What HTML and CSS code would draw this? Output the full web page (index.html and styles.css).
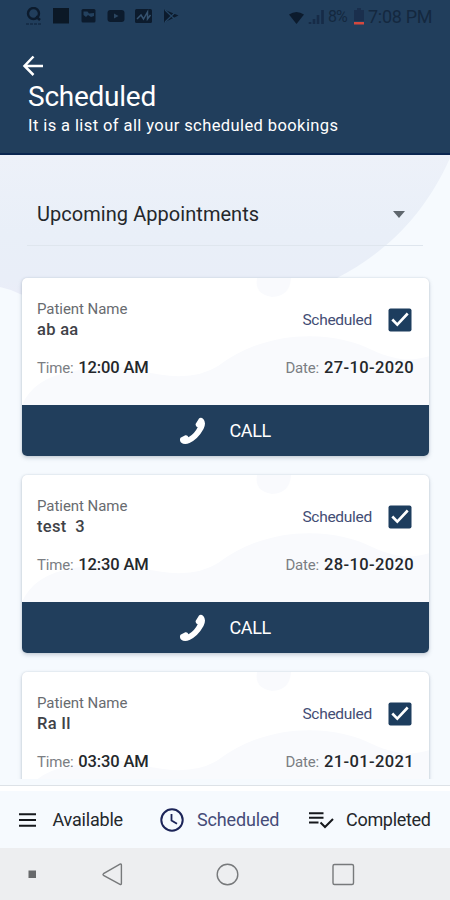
FILE: index.html
```html
<!DOCTYPE html>
<html lang="en">
<head>
<meta charset="utf-8">
<title>Scheduled</title>
<link rel="stylesheet" href="styles.css">
</head>
<body>
<svg class="defs" width="0" height="0" aria-hidden="true">
  <symbol id="waves" viewBox="0 0 408 127">
    <path d="M235 0H269Q268 18 250 19Q232 16 235 0Z"/>
    <path d="M0 127Q12 100 48 94Q86 84 116 92Q168 106 196 88C250 47 318 55 350 72C377 84 391 83 408 78V127Z"/>
  </symbol>
  <symbol id="check" viewBox="0 0 24 24">
    <rect x=".5" y=".5" width="23" height="23" rx="2" fill="#1d3d5e"/>
    <path d="M4.3 11.500l5 5.200L19.700 5.500" fill="none" stroke="#fff" stroke-width="2.6"/>
  </symbol>
  <symbol id="phone" viewBox="0 0 28 28">
    <path d="M20 1.500Q22-.2 24.500 2.200Q27.500 6 24.500 12Q19 22 10.500 26Q5.500 28.300 2 25.500Q.2 23 1.500 20.800L6.300 18.300Q8.500 17.800 9.500 20.200Q15.500 17 18.700 10.300Q16.300 9.500 16.600 7Z" fill="#fff"/>
  </symbol>
</svg>

<header class="header">
  <div class="status">
    <svg class="status-icons" width="160" height="20" viewBox="0 0 160 20">
      <g fill="none" stroke="#0c1b2d" stroke-width="2.400"><circle cx="7.500" cy="6.500" r="5.500"/><path d="M10 9.500l4 3.500"/></g>
      <path d="M0 17h15" stroke="#132a43" stroke-width="1.600" stroke-dasharray="3 1"/>
      <rect x="27" y="1" width="16" height="15.500" fill="#0b1826"/>
      <rect x="55.500" y="2" width="14" height="13.500" rx="1.500" fill="#0c1b2d"/>
      <path d="M57.500 8V4.500h4l1.500 2 5-.5v3l-3 1-3-2-2 2z" fill="#23415f"/>
      <rect x="81.500" y="3" width="17" height="12" rx="3" fill="#0c1b2d"/><path d="M88 6.500v5l4.500-2.500z" fill="#2b4661"/>
      <rect x="109" y="2" width="17" height="14" rx="1.500" fill="#0c1b2d"/>
      <path d="M111 12l4-4 2.500 4 4-7v7l3-4" fill="none" stroke="#365370" stroke-width="1.500"/>
      <path d="M138 2.500L152.500 8.500 138 15.500z" fill="#0c1b2d"/><path d="M139 3l9.500 9M139 15l9.500-9" stroke="#254564" stroke-width="1.200"/>
    </svg>
    <div class="status-right">
      <svg width="15" height="14" viewBox="0 0 15 14"><path d="M0 3.500Q7.500-1.500 15 3.500L7.500 13z" fill="#0c1b2d"/></svg>
      <svg class="signal" width="16" height="16" viewBox="0 0 16 16"><path d="M2 15v-2M6 15v-5M10 15V6M14.500 15V1" stroke="#162b47" stroke-width="2.600"/></svg>
      <span class="battery-text">8%</span>
      <svg class="battery" width="10" height="17" viewBox="0 0 10 17"><path d="M0 2h3V0h4v2h3v11H0z" fill="#1a2f4d"/><path d="M0 14h10v2.500H0z" fill="#d4483e"/></svg>
      <span class="clock">7:08 PM</span>
    </div>
  </div>
  <svg class="back" width="22" height="22" viewBox="0 0 22 22"><path d="M11.500 1.500L2.500 11l9 9M2.500 11H21" fill="none" stroke="#fff" stroke-width="2.500"/></svg>
  <h1>Scheduled</h1>
  <p class="subtitle">It is a list of all your scheduled bookings</p>
</header>

<main class="main">
  <svg class="backdrop" width="450" height="150" viewBox="0 0 450 150">
    <defs><linearGradient id="g" x1="0" y1="0" x2="0" y2="1"><stop offset="0" stop-color="#edf1f9"/><stop offset=".5" stop-color="#e9eff8"/><stop offset=".8" stop-color="#e9eef8"/><stop offset="1" stop-color="#ececf8"/></linearGradient></defs>
    <path d="M0 0H450V3C426 57 389 96 337 123C230 172 88 158 20 139Q10 134 0 132Z" fill="url(#g)"/>
  </svg>
  <div class="select"><span>Upcoming Appointments</span><svg width="12" height="7" viewBox="0 0 12 7"><path d="M0 0h12L6 7z" fill="#5f666d"/></svg></div>
  <section class="cards">
    <article class="card">
      <div class="info">
        <svg class="waves" width="408" height="127"><use href="#waves"/></svg>
        <div class="row top"><div><div class="label">Patient Name</div><div class="name">ab aa</div></div><div class="state"><span>Scheduled</span><svg width="24" height="24"><use href="#check"/></svg></div></div>
        <div class="row times"><div><span class="key">Time:</span><b class="time">12:00 AM</b></div><div><span class="key">Date:</span><b class="date">27-10-2020</b></div></div>
      </div>
      <div class="call"><svg width="28" height="28"><use href="#phone"/></svg><span>CALL</span></div>
    </article>
    <article class="card">
      <div class="info">
        <svg class="waves" width="408" height="127"><use href="#waves"/></svg>
        <div class="row top"><div><div class="label">Patient Name</div><div class="name">test&nbsp; 3</div></div><div class="state"><span>Scheduled</span><svg width="24" height="24"><use href="#check"/></svg></div></div>
        <div class="row times"><div><span class="key">Time:</span><b class="time">12:30 AM</b></div><div><span class="key">Date:</span><b class="date">28-10-2020</b></div></div>
      </div>
      <div class="call"><svg width="28" height="28"><use href="#phone"/></svg><span>CALL</span></div>
    </article>
    <article class="card">
      <div class="info">
        <svg class="waves" width="408" height="127"><use href="#waves"/></svg>
        <div class="row top"><div><div class="label">Patient Name</div><div class="name">Ra Il</div></div><div class="state"><span>Scheduled</span><svg width="24" height="24"><use href="#check"/></svg></div></div>
        <div class="row times"><div><span class="key">Time:</span><b class="time">03:30 AM</b></div><div><span class="key">Date:</span><b class="date">21-01-2021</b></div></div>
      </div>
    </article>
  </section>
</main>

<nav class="tabs">
  <div class="tab available"><svg width="17" height="14" viewBox="0 0 17 14"><path d="M0 1.200h17M0 7h17M0 12.800h17" stroke="#16181c" stroke-width="2"/></svg><span>Available</span></div>
  <div class="tab active"><svg width="24" height="24" viewBox="0 0 24 24"><circle cx="12" cy="12" r="10.700" fill="none" stroke="#1c2458" stroke-width="2"/><path d="M11.500 6v6.500l5.500 3.300" fill="none" stroke="#1c2458" stroke-width="1.800"/></svg><span>Scheduled</span></div>
  <div class="tab completed"><svg width="25" height="18" viewBox="0 0 25 18"><path d="M0 2.200h14.500M0 6.800h14.500M0 11.400h9.500M11.500 11.500l4.500 4.500 8-8" fill="none" stroke="#16181c" stroke-width="2"/></svg><span>Completed</span></div>
</nav>
<footer class="sysnav">
  <svg width="450" height="52" viewBox="0 0 450 52"><path d="M28.500 22.500h7.500v7.500h-7.500z" fill="#67696b"/><g fill="none" stroke="#77797b" stroke-width="1.400"><path d="M120 16.200Q121.400 15.500 121.400 17V35.500Q121.400 37 120 36.300L103.500 27.300Q102.500 26.500 103.500 25.700Z"/><circle cx="227.500" cy="26.500" r="10.300"/><rect x="333" y="16.500" width="20.500" height="20" rx="1.500"/></g></svg>
</footer>
</body>
</html>
```
FILE: styles.css
```css
* { box-sizing: border-box; }
body {
  margin: 0;
  width: 450px;
  height: 900px;
  overflow: hidden;
  display: flex;
  flex-direction: column;
  background: #f6fafe;
  font-family: Roboto, "Liberation Sans", sans-serif;
  color: #24272b;
}
svg { display: block; flex: none; }
.defs { position: absolute; }
span, b, h1, p, .label, .name { white-space: nowrap; }

.header {
  flex: none;
  height: 155px;
  background: #213e5c;
  border-bottom: 2px solid #0a2650;
  color: #fff;
}
.status {
  height: 55px;
  padding: 7px 18px 0 26px;
  display: flex;
  justify-content: space-between;
  align-items: flex-start;
  color: #14283f;
}
.status-right { display: flex; align-items: flex-start; padding-top: 2px; }
.status-right > svg:first-child { margin-top: 2px; }
.signal { margin-left: 4px; }
.battery-text { font-size: 16px; line-height: 16px; margin-left: 4px; letter-spacing: -1.1px; width: 21px; }
.battery { margin: -1px 4px 0 5px; }
.clock { font-size: 18px; line-height: 16px; width: 64px; letter-spacing: -.3px; }
.back { margin-left: 22px; }
h1 { margin: 4px 0 0 28px; font-size: 28px; line-height: 31px; font-weight: 400; letter-spacing: -.25px; }
.subtitle { margin: 4px 0 0 28px; font-size: 16.500px; line-height: 20px; letter-spacing: .41px; }

.main { flex: none; height: 624px; position: relative; overflow: hidden; }
.backdrop { position: absolute; left: 0; top: 0; }
.select {
  position: relative;
  margin: 0 27px;
  height: 91px;
  padding: 28px 18px 0 10px;
  border-bottom: 1px solid #dfe6ee;
  display: flex;
  align-items: center;
  justify-content: space-between;
  font-size: 20px;
  letter-spacing: .05px;
}
.cards { position: relative; margin: 32px 21px 0 21.500px; display: flex; flex-direction: column; gap: 19px; }
.card { height: 178px; flex: none; background: #fff; border-radius: 5px; box-shadow: 0 2px 4px #71809455, 0 0 2px #71809444; }
.info { position: relative; height: 127px; padding: 22px 15px 0 15.500px; overflow: hidden; }
.waves { position: absolute; left: 0; top: 0; fill: #f9fafd; }
.row { position: relative; display: flex; justify-content: space-between; }
.top { height: 55px; }
.label { font-size: 15px; line-height: 18px; letter-spacing: -.05px; color: #686b6f; }
.name { font-size: 16.500px; line-height: 23px; font-weight: 500; color: #404247; letter-spacing: .3px; }
.state { display: flex; align-items: center; gap: 16px; height: 24px; margin: 7.500px 2px 0 0; font-size: 15.500px; letter-spacing: -.28px; color: #434d74; }
.times { line-height: 25px; }
.times > div { display: flex; align-items: baseline; }
.key { font-size: 15px; color: #7b7e83; margin-right: 5px; letter-spacing: -.2px; }
.times b { font-size: 16.500px; font-weight: 500; }
.time { letter-spacing: -.15px; }
.date { letter-spacing: .38px; }
.call { height: 51px; background: #213e5c; border-radius: 0 0 5px 5px; display: flex; align-items: center; padding-left: 157px; gap: 23px; color: #fff; font-size: 18px; letter-spacing: -.35px; }

.tabs { flex: none; height: 63px; margin-top: 6px; border-top: 1px solid #dde2e7; background: linear-gradient(#fff 0 5px, #f6fafe 5px); display: flex; align-items: center; padding: 5px 19px 0 19px; font-size: 18px; }
.tab { display: flex; align-items: center; }
.available { width: 141px; gap: 16.500px; letter-spacing: -.2px; }
.active { width: 148.500px; gap: 13px; color: #454c78; letter-spacing: -.15px; }
.completed { gap: 12.500px; letter-spacing: -.3px; }
.sysnav { flex: none; height: 52px; background: #edeef0; }
```
